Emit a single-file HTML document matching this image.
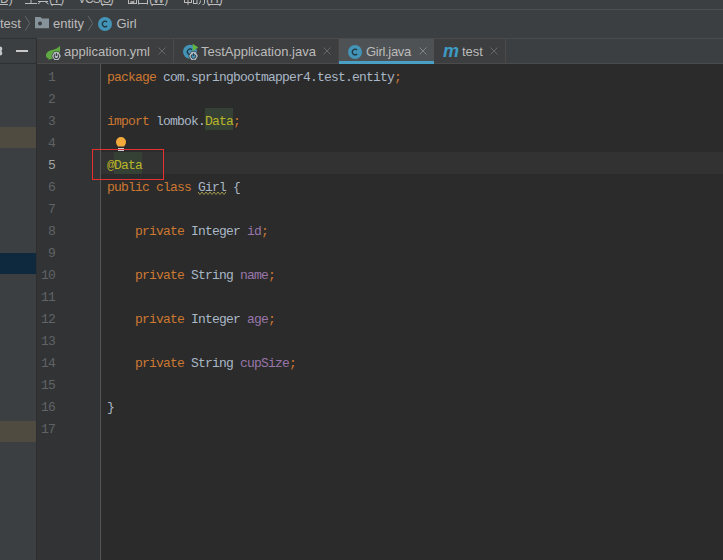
<!DOCTYPE html>
<html><head><meta charset="utf-8">
<style>
*{margin:0;padding:0;box-sizing:border-box}
html,body{width:723px;height:560px;overflow:hidden;background:#2b2b2b;position:relative;font-family:"Liberation Sans",sans-serif}
.a{position:absolute}
#menu{left:0;top:0;width:723px;height:9px;background:#3c3f41;overflow:hidden}
.mt{position:absolute;top:-8px;font-size:12px;line-height:14px;color:#bbbbbb;white-space:nowrap}
#menuline{left:0;top:9px;width:723px;height:1px;background:#4f5052}
#crumb{left:0;top:10px;width:723px;height:28px;background:#3c3f41}
.ct{position:absolute;top:16px;font-size:13px;color:#bbbbbb;line-height:16px;white-space:nowrap}
#lp{left:0;top:38px;width:36px;height:522px;background:#3c3f41}
#lpb{left:36px;top:38px;width:1px;height:522px;background:#2d2e2f}
#tabs{left:37px;top:38px;width:686px;height:26px;background:#3c3f41}
#gutter{left:37px;top:64px;width:63px;height:496px;background:#313335}
#gdiv{left:100px;top:64px;width:1px;height:496px;background:#555555}
.tab{position:absolute;top:39px;height:24px;background:#3d3e3f}
.tt{position:absolute;top:44px;font-size:13px;color:#bbbbbb;line-height:16px;white-space:nowrap}
.sep{position:absolute;top:39px;width:1px;height:24px;background:#4b4b4b}
.x{position:absolute;top:47px;width:8px;height:8px}
.ln{position:absolute;left:29px;width:26px;text-align:right;font-family:"Liberation Mono",monospace;font-size:13px;letter-spacing:-0.8px;color:#606366;line-height:22px;height:22px;white-space:pre}
.cd{position:absolute;left:107px;font-family:"Liberation Mono",monospace;font-size:13px;letter-spacing:-0.8px;color:#a9b7c6;line-height:22px;height:22px;white-space:pre}
.k{color:#cc7832}
.an{color:#bbb529}
.f{color:#9876aa}
.hl{position:absolute;background:#344134;height:22px}
</style></head><body>
<div id="menu" class="a">
  <div class="mt" style="left:0px">D)</div>
  <div class="mt" style="left:49px">(T)</div>
  <div class="mt" style="left:78px;letter-spacing:-1px">VCS(S)</div>
  <div class="mt" style="left:149px">(W)</div>
  <div class="mt" style="left:206px">(H)</div>
  <svg class="a" style="left:0;top:0" width="723" height="9">
    <g stroke="#bbbbbb" stroke-width="1" fill="none">
      <path d="M0 4.5H8M51 4.5H61M101 4.5H111M152 4.5H164M208 4.5H221"/>
      <path d="M25 3.5H37M31 0V3M38 1.5H48M40.5 2L38 4M45.5 2L48.5 4"/>
      <path d="M128.5 0V4M136.5 0V4M128.5 3.5H136.5M130.5 1.5L134.5 3M134.5 1L130.5 2.5M138.5 0V4.5M147.5 0V4.5M138.5 3.5H147.5"/>
      <path d="M184.5 0V3M191.5 0V3M188 0V5M184.5 2.5H191.5M193.5 0V3.5M197 0V3.5M193 3.5H197.5M200.5 0.5Q200.5 3.5 198.5 4.5M204.5 0V3.5Q204.5 4.5 202.5 4.5"/>
    </g>
  </svg>
</div>
<div id="menuline" class="a"></div>
<div id="crumb" class="a">
  <div class="ct" style="left:0;top:6px">test</div>
  <svg class="a" style="left:24px;top:5px" width="8" height="16"><path d="M1.2 1.2L5.7 8.4L1.2 15.6" stroke="#64686b" stroke-width="1" fill="none"/></svg>
  <svg class="a" style="left:34px;top:6px" width="16" height="13">
    <path d="M1 1H6.5L8 2.6H15V12.2H1Z" fill="#87939a"/>
    <circle cx="6" cy="7.4" r="2" fill="#3c3f41"/>
  </svg>
  <div class="ct" style="left:53px;top:6px">entity</div>
  <svg class="a" style="left:87px;top:5px" width="8" height="16"><path d="M1.2 1.2L5.7 8.4L1.2 15.6" stroke="#64686b" stroke-width="1" fill="none"/></svg>
  <svg class="a" style="left:98px;top:6.5px" width="14" height="14">
    <circle cx="7" cy="7" r="7" fill="#4394b6"/>
    <path d="M9.1 5.0A2.8 2.8 0 1 0 9.1 9.0" stroke="#1f3540" stroke-width="1.2" fill="none"/>
  </svg>
  <div class="ct" style="left:116.5px;top:6px">Girl</div>
</div>
<div id="lp" class="a"></div>
<!-- left panel header border lines -->
<div class="a" style="left:0;top:38px;width:36px;height:1px;background:#2f3031"></div>
<div class="a" style="left:0;top:63px;width:36px;height:1px;background:#2f3031"></div>
<svg class="a" style="left:0;top:45px" width="6" height="12">
  <path d="M0 1.4Q2.3 1.4 2.3 3.6Q2.3 5.2 1.3 6Q2.3 6.8 2.3 8.4Q2.3 10.4 0 10.4Z" fill="#c4c6c8"/>
</svg>
<div class="a" style="left:16px;top:50px;width:12px;height:2px;background:#c9c9c9"></div>
<!-- left panel row highlights -->
<div class="a" style="left:0;top:127px;width:36px;height:21px;background:#4f4b41"></div>
<div class="a" style="left:0;top:253px;width:36px;height:21px;background:#0e293d"></div>
<div class="a" style="left:0;top:421px;width:36px;height:21px;background:#4f4b41"></div>
<div id="lpb" class="a"></div>

<div id="tabs" class="a"></div>
<div class="a" style="left:37px;top:38px;width:686px;height:1px;background:#4b4b4b"></div>
<div class="a" style="left:37px;top:63px;width:686px;height:1px;background:#4b4b4b"></div>
<!-- tabs -->
<div class="tab" style="left:37px;width:136px"></div>
<div class="sep" style="left:173px"></div>
<div class="tab" style="left:174px;width:164px"></div>
<div class="sep" style="left:338px;background:#454545"></div>
<div class="tab" style="left:339px;width:95px;background:#4e5254;height:25px"></div>
<div class="a" style="left:339px;top:61px;width:95px;height:3px;background:#4aa0c4"></div>
<div class="tab" style="left:434px;width:71px"></div>
<div class="sep" style="left:505px"></div>

<!-- tab1 icon: spring leaf + hex -->
<svg class="a" style="left:45px;top:45px" width="17" height="16">
  <path d="M14.6 0.8C13.2 3.2 10.5 4.3 7.3 4.9C3.4 5.6 0.8 7.8 0.9 10.6C1 12.6 2.4 13.6 4 13.7L2.6 14.6L3.6 14.4C9 14.2 13.6 11.6 14.8 7C15.3 5 15.2 2.6 14.6 0.8Z" fill="#5ea941"/>
  <path d="M6.3 11L8.9 6.4H13.9L16.5 11L13.9 15.6H8.9Z" fill="#3d3e3f"/>
  <path d="M7 11L9.3 7.1H13.5L15.8 11L13.5 14.9H9.3Z" fill="#b4bbc1"/>
  <path d="M12.66 9.5A2.2 2.2 0 1 1 10.14 9.5M11.4 8.1V10.9" fill="none" stroke="#3a3d40" stroke-width="1.1"/>
</svg>
<div class="tt" style="left:64px">application.yml</div>
<svg class="x" style="left:158px"><path d="M0.5 0.5L7.5 7.5M7.5 0.5L0.5 7.5" stroke="#65686b" stroke-width="1"/></svg>

<!-- tab2 icon -->
<svg class="a" style="left:182px;top:43px" width="18" height="18">
  <circle cx="8" cy="8.8" r="7" fill="#4394b6"/>
  <path d="M10.1 6.8A2.8 2.8 0 1 0 10.1 10.8" stroke="#1f3540" stroke-width="1.2" fill="none"/>
  <path d="M10.7 0.8L16.3 4.5L10.7 8Z" fill="#62b543"/>
  <path d="M6.4 13L9 8.4H14L16.6 13L14 17.6H9Z" fill="#3d3e3f"/>
  <path d="M7.1 13L9.4 9.1H13.6L15.9 13L13.6 16.9H9.4Z" fill="#b4bbc1"/>
  <circle cx="11.5" cy="13.1" r="2.3" fill="#4394b6"/>
  <path d="M12.76 11.6A2.2 2.2 0 1 1 10.24 11.6M11.5 10.2V13" fill="none" stroke="#2d3f48" stroke-width="1"/>
</svg>
<div class="tt" style="left:201px">TestApplication.java</div>
<svg class="x" style="left:323px"><path d="M0.5 0.5L7.5 7.5M7.5 0.5L0.5 7.5" stroke="#65686b" stroke-width="1"/></svg>

<!-- tab3 icon -->
<svg class="a" style="left:348px;top:45px" width="14" height="14">
  <circle cx="7" cy="7" r="7" fill="#4394b6"/>
  <path d="M9.1 5.0A2.8 2.8 0 1 0 9.1 9.0" stroke="#1f3540" stroke-width="1.2" fill="none"/>
</svg>
<div class="tt" style="left:366px;letter-spacing:-0.3px">Girl.java</div>
<svg class="x" style="left:419px"><path d="M0.5 0.5L7.5 7.5M7.5 0.5L0.5 7.5" stroke="#7f8385" stroke-width="1"/></svg>

<!-- tab4 m -->
<div class="a" style="left:443px;top:41px;font-family:'Liberation Sans';font-weight:bold;font-style:italic;font-size:18px;line-height:20px;color:#3d9bc4">m</div>
<div class="tt" style="left:462px">test</div>
<svg class="x" style="left:490px"><path d="M0.5 0.5L7.5 7.5M7.5 0.5L0.5 7.5" stroke="#65686b" stroke-width="1"/></svg>

<div id="gutter" class="a"></div>
<div id="gdiv" class="a"></div>

<!-- current line -->
<div class="a" style="left:101px;top:152px;width:622px;height:22px;background:#323232"></div>
<div class="hl" style="left:205px;top:108px;width:28px"></div>
<div class="hl" style="left:114px;top:152px;width:28px"></div>

<!-- line numbers -->
<div class="ln" style="top:67px">1</div>
<div class="ln" style="top:89px">2</div>
<div class="ln" style="top:111px">3</div>
<div class="ln" style="top:133px">4</div>
<div class="ln" style="top:155px;color:#a4a3a3">5</div>
<div class="ln" style="top:177px">6</div>
<div class="ln" style="top:199px">7</div>
<div class="ln" style="top:221px">8</div>
<div class="ln" style="top:243px">9</div>
<div class="ln" style="top:265px">10</div>
<div class="ln" style="top:287px">11</div>
<div class="ln" style="top:309px">12</div>
<div class="ln" style="top:331px">13</div>
<div class="ln" style="top:353px">14</div>
<div class="ln" style="top:375px">15</div>
<div class="ln" style="top:397px">16</div>
<div class="ln" style="top:419px">17</div>

<!-- code -->
<div class="cd" style="top:67px"><span class="k">package</span> com.springbootmapper4.test.entity<span class="k">;</span></div>
<div class="cd" style="top:111px"><span class="k">import</span> lombok.<span class="an">Data</span><span class="k">;</span></div>
<div class="cd" style="top:155px"><span class="an">@Data</span></div>
<div class="cd" style="top:177px"><span class="k">public class</span> Girl {</div>
<div class="cd" style="top:221px">    <span class="k">private</span> Integer <span class="f">id</span><span class="k">;</span></div>
<div class="cd" style="top:265px">    <span class="k">private</span> String <span class="f">name</span><span class="k">;</span></div>
<div class="cd" style="top:309px">    <span class="k">private</span> Integer <span class="f">age</span><span class="k">;</span></div>
<div class="cd" style="top:353px">    <span class="k">private</span> String <span class="f">cupSize</span><span class="k">;</span></div>
<div class="cd" style="top:397px">}</div>

<!-- wavy underline under Girl -->
<svg class="a" style="left:197px;top:191px" width="30" height="5">
  <polyline points="1,1 3,3.5 5,1 7,3.5 9,1 11,3.5 13,1 15,3.5 17,1 19,3.5 21,1 23,3.5 25,1 27,3.5 29,1" fill="none" stroke="#9e9a4c" stroke-width="1"/>
</svg>

<!-- bulb -->
<svg class="a" style="left:115px;top:136px" width="12" height="16">
  <path d="M6 1A5 5 0 0 1 11 6C11 8 10 9 9 10.6H3C2 9 1 8 1 6A5 5 0 0 1 6 1Z" fill="#f4aa3b"/>
  <rect x="3" y="12" width="6" height="1" fill="#c9cdd0"/>
  <rect x="3" y="14" width="6" height="1" fill="#c9cdd0"/>
</svg>

<!-- red box -->
<div class="a" style="left:92px;top:149px;width:72px;height:31px;border:1px solid #e5302f"></div>
</body></html>
